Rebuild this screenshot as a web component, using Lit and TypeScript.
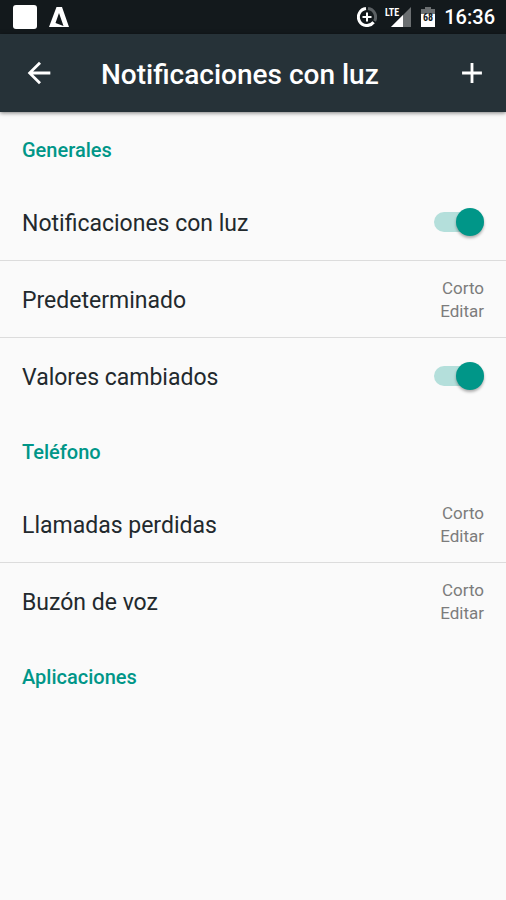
import { LitElement, html, css, svg } from "lit";
import { customElement, property, state } from "lit/decorators.js";

interface Row {
  id: string;
  label: string;
  kind: "switch" | "edit";
}

interface Section {
  title: string;
  rows: Row[];
}

const SECTIONS: Section[] = [
  {
    title: "Generales",
    rows: [
      { id: "light", label: "Notificaciones con luz", kind: "switch" },
      { id: "default", label: "Predeterminado", kind: "edit" },
      { id: "custom", label: "Valores cambiados", kind: "switch" },
    ],
  },
  {
    title: "Teléfono",
    rows: [
      { id: "missed", label: "Llamadas perdidas", kind: "edit" },
      { id: "voicemail", label: "Buzón de voz", kind: "edit" },
    ],
  },
  { title: "Aplicaciones", rows: [] },
];

@customElement("status-bar")
class StatusBar extends LitElement {
  static styles = css`
    :host {
      display: flex;
      align-items: center;
      height: 34px;
      padding: 0 11px 0 12px;
      background: #13191c;
      color: #fff;
    }
    svg {
      display: block;
      flex: none;
    }
    .group {
      display: flex;
      align-items: center;
      gap: 11px;
    }
    .end {
      margin-left: auto;
      gap: 8px;
    }
    .clock {
      font-size: 20px;
      font-weight: 500;
      line-height: 24px;
    }
    .lte,
    .level {
      font: 700 10px "Roboto Condensed", Roboto, sans-serif;
    }
  `;

  render() {
    return html`
      <div class="group">
        <svg width="26" height="26" viewBox="0 0 26 26" aria-hidden="true">
          <rect x="1" y="1" width="24" height="24" rx="3" fill="#fff" />
        </svg>
        <svg width="20" height="22" viewBox="0 0 20 22" aria-hidden="true">
          <path
            fill="#fff"
            fill-rule="evenodd"
            d="M7.500 1h5.500L20 21H0zM10 7L6.500 17l8 3z"
          />
        </svg>
      </div>
      <div class="group end">
        <svg width="20" height="20" viewBox="0 0 20 20" aria-hidden="true">
          <g fill="none" stroke-width="3">
            <path stroke="#5c6164" d="M11 1.600a8.500 8.500 0 0 1 6.600 12.400" />
            <path stroke="#fff" d="M9 1.600a8.500 8.500 0 1 0 7.600 13.700" />
            <path stroke="#fff" stroke-width="2" d="M10 5.500v9M5.500 10h9" />
          </g>
        </svg>
        <svg width="27" height="22" viewBox="0 0 27 22" role="img" aria-label="LTE">
          <path fill="#6b6f71" d="M26 1v20H6z" />
          <path fill="#fff" d="M18 9v12H6z" />
          <text class="lte" x="0" y="10" fill="#fff">LTE</text>
        </svg>
        <svg width="16" height="22" viewBox="0 0 16 22" role="img" aria-label="68 %">
          <path fill="#6b6f71" d="M5 1h6v2h4v6H1V3h4z" />
          <path fill="#fff" d="M1 8h14v13H1z" />
          <text class="level" x="8" y="15" text-anchor="middle" fill="#13191c">68</text>
        </svg>
        <span class="clock">16:36</span>
      </div>
    `;
  }
}

@customElement("setting-row")
class SettingRow extends LitElement {
  @property() label = "";
  @property() kind: Row["kind"] = "edit";
  @state() private on = true;

  static styles = css`
    :host {
      display: block;
    }
    .row {
      display: flex;
      align-items: center;
      justify-content: space-between;
      min-height: 76px;
      padding: 0 22px;
      color: #22292d;
    }
    .name {
      padding-top: 3px;
      font-size: 23px;
      line-height: 28px;
    }
    .edit {
      display: flex;
      flex-direction: column;
      align-items: flex-end;
      padding: 2px 0 0;
      border: 0;
      background: none;
      color: #7c7c7c;
      font: 17px/23px Roboto, sans-serif;
      cursor: pointer;
    }
    .switch {
      position: relative;
      appearance: none;
      width: 50px;
      height: 28px;
      margin: 0;
      cursor: pointer;
    }
    .switch::before,
    .switch::after {
      content: "";
      position: absolute;
    }
    .switch::before {
      inset: 4px 0;
      border-radius: 10px;
      background: #c4c4c4;
    }
    .switch::after {
      left: 0;
      width: 28px;
      height: 28px;
      border-radius: 50%;
      background: #f1f1f1;
      box-shadow: 0 2px 3px #00000050;
    }
    .switch:checked::before {
      background: #b4dfdb;
    }
    .switch:checked::after {
      left: auto;
      right: 0;
      background: #009688;
    }
  `;

  private toggle(e: Event) {
    this.on = (e.target as HTMLInputElement).checked;
  }

  render() {
    if (this.kind === "switch") {
      return html`<label class="row">
        <span class="name">${this.label}</span>
        <input class="switch" type="checkbox" role="switch" .checked=${this.on} @change=${this.toggle} />
      </label>`;
    }
    return html`<div class="row">
      <span class="name" id="name">${this.label}</span>
      <button class="edit" type="button" aria-describedby="name">
        <span>Corto</span><span>Editar</span>
      </button>
    </div>`;
  }
}

@customElement("app-root")
class AppRoot extends LitElement {
  static styles = css`
    :host {
      display: block;
      min-height: 100vh;
      background: #fafafa;
      font-family: Roboto, sans-serif;
    }
    .bar {
      position: relative;
      display: flex;
      align-items: center;
      height: 78px;
      padding: 0 17px 0 22px;
      background: #263238;
      color: #fff;
      box-shadow: 0 1px 4px #00000080;
    }
    .title {
      flex: 1;
      margin: 0 0 0 45px;
      padding-top: 3px;
      font-size: 28px;
      font-weight: 500;
      line-height: 34px;
    }
    .icon {
      display: grid;
      place-items: center;
      width: 34px;
      height: 34px;
      padding: 0;
      border: 0;
      background: none;
      color: inherit;
      cursor: pointer;
    }
    .heading {
      display: flex;
      align-items: center;
      box-sizing: border-box;
      height: 72px;
      margin: 0;
      padding: 3px 22px 0;
      color: #009688;
      font-size: 20px;
      font-weight: 500;
    }
    .item + .item {
      border-top: 1px solid #dcdcdc;
    }
  `;

  private icon(d: string) {
    return html`<svg width="34" height="34" viewBox="0 0 24 24" aria-hidden="true">
      ${svg`<path fill="currentColor" d=${d} />`}
    </svg>`;
  }

  render() {
    return html`
      <status-bar></status-bar>
      <header class="bar">
        <button class="icon" type="button" aria-label="Volver">
          ${this.icon("M20 11H7.830l5.590-5.590L12 4l-8 8 8 8 1.410-1.410L7.830 13H20v-2z")}
        </button>
        <h1 class="title">Notificaciones con luz</h1>
        <button class="icon" type="button" aria-label="Añadir">
          ${this.icon("M19 13h-6v6h-2v-6H5v-2h6V5h2v6h6v2z")}
        </button>
      </header>
      <main>
        ${SECTIONS.map(
          (s) => html`<section>
            <h2 class="heading">${s.title}</h2>
            ${s.rows.map(
              (r) => html`<setting-row class="item" .label=${r.label} .kind=${r.kind}></setting-row>`
            )}
          </section>`
        )}
      </main>
    `;
  }
}
